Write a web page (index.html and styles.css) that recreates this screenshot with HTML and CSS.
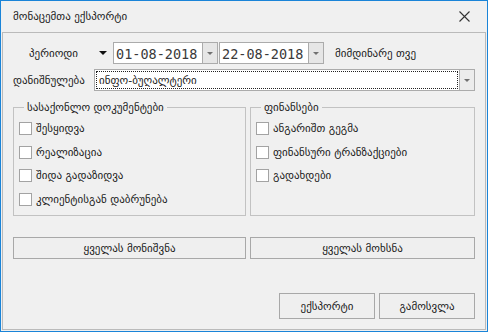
FILE: index.html
```html
<!DOCTYPE html>
<html lang="ka">

<head>
    <meta charset="UTF-8">
    <meta name="viewport" content="width=device-width, initial-scale=1.0">
    <title>მონაცემთა ექსპორტი</title>
    <link rel="stylesheet" href="styles.css">
</head>

<body>
    <div class="window">
        <div class="titlebar">
            <span class="title">მონაცემთა ექსპორტი</span>
            <svg class="close" width="11" height="11" viewBox="0 0 11 11">
                <path d="M0.5 0.5 L10.5 10.5 M10.5 0.5 L0.5 10.5" stroke="#333" stroke-width="1.1" fill="none"/>
            </svg>
        </div>

        <div class="panel">
            <div class="row period-row">
                <span class="period-label">პერიოდი</span>
                <span class="period-arrow"></span>
                <div class="combo date">
                    <span class="combo-text">01-08-2018</span>
                    <span class="combo-btn"><i></i></span>
                </div>
                <div class="combo date">
                    <span class="combo-text">22-08-2018</span>
                    <span class="combo-btn"><i></i></span>
                </div>
                <span class="current-month">მიმდინარე თვე</span>
            </div>

            <div class="row purpose-row">
                <span class="purpose-label">დანიშნულება</span>
                <div class="combo select">
                    <span class="combo-text"><span class="focus">ინფო-ბუღალტერი</span></span>
                    <span class="combo-btn"><i></i></span>
                </div>
            </div>

            <div class="groups">
                <fieldset class="group">
                    <legend>სასაქონლო დოკუმენტები</legend>
                    <label class="check"><span class="box"></span>შესყიდვა</label>
                    <label class="check"><span class="box"></span>რეალიზაცია</label>
                    <label class="check"><span class="box"></span>შიდა გადაზიდვა</label>
                    <label class="check"><span class="box"></span>კლიენტისგან დაბრუნება</label>
                </fieldset>
                <fieldset class="group">
                    <legend>ფინანსები</legend>
                    <label class="check"><span class="box"></span>ანგარიშთ გეგმა</label>
                    <label class="check"><span class="box"></span>ფინანსური ტრანზაქციები</label>
                    <label class="check"><span class="box"></span>გადახდები</label>
                </fieldset>
            </div>

            <div class="select-buttons">
                <button type="button">ყველას მონიშვნა</button>
                <button type="button">ყველას მოხსნა</button>
            </div>

            <div class="footer">
                <button type="button">ექსპორტი</button>
                <button type="button">გამოსვლა</button>
            </div>
        </div>
    </div>
</body>

</html>
```

FILE: styles.css
```css
body {
    margin: 0;
    font-family: "DejaVu Sans", sans-serif;
    font-size: 11px;
    color: #1b1b1b;
    background-color: #f0f0f0;
}

.window {
    width: 488px;
    height: 332px;
    box-sizing: border-box;
    border: 1px solid #1a84d8;
    background-color: #f0f0f0;
    display: flex;
    flex-direction: column;
}

.titlebar {
    height: 31px;
    flex: none;
    display: flex;
    align-items: center;
    padding-left: 12px;
}

.title {
    flex: 1;
}

.close {
    margin-right: 17px;
    margin-top: -1px;
}

.panel {
    flex: 1;
    margin: 0 1px 1px 1px;
    border: 1px solid #bababa;
    padding: 0 10px;
    display: flex;
    flex-direction: column;
}

.row {
    display: flex;
    align-items: center;
    height: 22px;
}

.period-row {
    margin-top: 9px;
}

.purpose-row {
    margin-top: 5px;
}

.period-label {
    width: 81px;
    text-align: center;
}

.period-arrow {
    width: 0;
    height: 0;
    border-left: 4px solid transparent;
    border-right: 4px solid transparent;
    border-top: 4px solid #111;
    margin-left: 5px;
    margin-right: 6px;
}

.purpose-label {
    width: 81px;
}

/* combo box: text part + drop button */
.combo {
    height: 22px;
    box-sizing: border-box;
    border: 1px solid #ababab;
    display: flex;
    background-color: #fff;
}

.combo-text {
    flex: 1;
    display: flex;
    align-items: center;
    padding-left: 2px;
}

.combo-btn {
    width: 14px;
    border-left: 1px solid #ababab;
    background-color: #e6e6e6;
    display: flex;
    align-items: center;
    justify-content: center;
}

.combo-btn i {
    width: 0;
    height: 0;
    border-left: 3px solid transparent;
    border-right: 3px solid transparent;
    border-top: 3px solid #707070;
}

.date {
    width: 105px;
    margin-right: 1px;
}

.date .combo-text {
    font-family: "DejaVu Sans Mono", monospace;
    font-size: 13.5px;
    color: #3a3a3a;
    padding-top: 1px;
}

.current-month {
    margin-left: 10px;
}

.select {
    width: 381px;
}

.select .combo-text {
    padding: 1px;
}

.select .focus {
    flex: 1;
    align-self: stretch;
    display: flex;
    align-items: center;
    padding-left: 2px;
    border: 1px dotted #222;
}

.select .combo-btn {
    background-color: #ececec;
}

.groups {
    display: grid;
    grid-template-columns: 233px 225px;
    gap: 4px;
    margin-top: 10px;
}

.group {
    margin: 0;
    height: 115px;
    box-sizing: border-box;
    border: 1px solid #c2c2c2;
    padding: 3px 5px 0 5px;
    display: flex;
    flex-direction: column;
}

.group legend {
    padding: 0 3px;
    margin-left: 5px;
}

.check {
    height: 23.5px;
    display: flex;
    align-items: center;
}

.box {
    width: 13px;
    height: 13px;
    box-sizing: border-box;
    border: 1px solid #a3a3a3;
    background-color: #fff;
    margin-right: 4px;
}

button {
    font-family: "DejaVu Sans", sans-serif;
    font-size: 11px;
    color: #1b1b1b;
    background-color: #efefef;
    border: 1px solid #a8a8a8;
    border-radius: 0;
    padding: 0;
}

.select-buttons {
    display: grid;
    grid-template-columns: 233px 225px;
    gap: 4px;
    margin-top: 21px;
}

.select-buttons button {
    height: 22px;
}

.footer {
    display: flex;
    justify-content: flex-end;
    gap: 4px;
    margin-top: 34px;
}

.footer button {
    width: 96px;
    height: 26px;
}
```
